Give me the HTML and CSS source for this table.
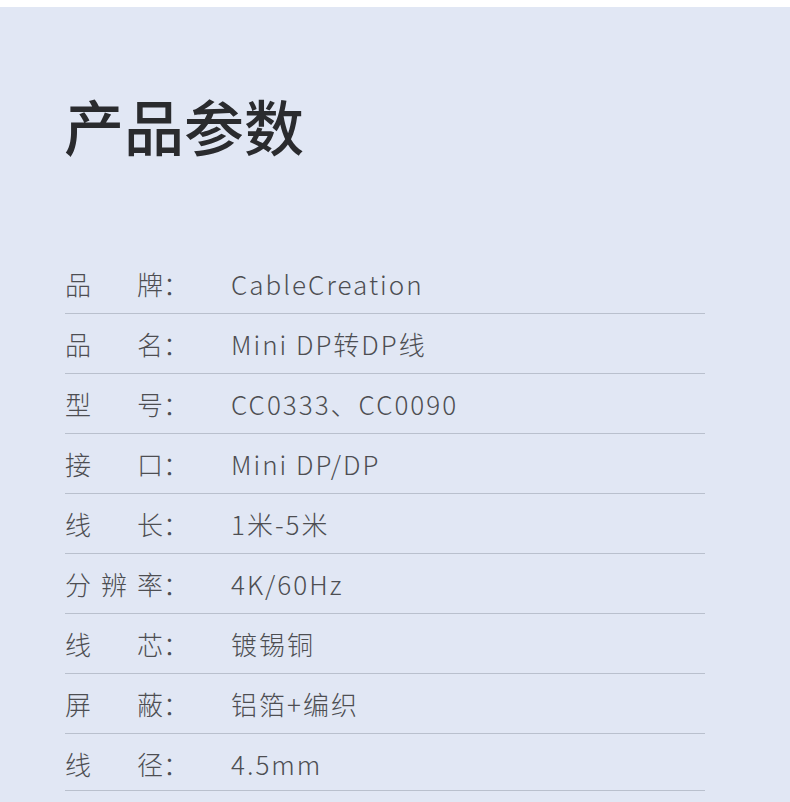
FILE: index.html
```html
<!DOCTYPE html>
<html lang="zh-CN">
<head>
<meta charset="utf-8">
<title>产品参数</title>
<link rel="stylesheet" href="styles.css">
</head>
<body>
<div class="page">
  <div class="inner">
    <h1 class="title">产品参数</h1>
    <div class="table">
      <div class="row"><span class="k">品牌</span><span class="colon">：</span><span class="v">CableCreation</span></div>
      <div class="row"><span class="k">品名</span><span class="colon">：</span><span class="v">Mini DP转DP线</span></div>
      <div class="row"><span class="k">型号</span><span class="colon">：</span><span class="v">CC0333、CC0090</span></div>
      <div class="row"><span class="k">接口</span><span class="colon">：</span><span class="v">Mini DP/DP</span></div>
      <div class="row"><span class="k">线长</span><span class="colon">：</span><span class="v">1米-5米</span></div>
      <div class="row"><span class="k">分辨率</span><span class="colon">：</span><span class="v">4K/60Hz</span></div>
      <div class="row"><span class="k">线芯</span><span class="colon">：</span><span class="v">镀锡铜</span></div>
      <div class="row"><span class="k">屏蔽</span><span class="colon">：</span><span class="v">铝箔+编织</span></div>
      <div class="row last"><span class="k">线径</span><span class="colon">：</span><span class="v">4.5mm</span></div>
    </div>
  </div>
</div>
</body>
</html>
```

FILE: styles.css
```css
html, body {
  margin: 0;
  padding: 0;
  background: #ffffff;
}
.page {
  margin-top: 7px;
  background: #e1e7f4;
  height: 795px;
  overflow: hidden;
  font-family: "Noto Sans CJK SC", "Noto Sans", sans-serif;
}
.inner {
  padding: 0 85px 0 64px;
}
.title {
  margin: 0;
  padding-top: 78px;
  font-size: 60px;
  line-height: 80px;
  font-weight: 500;
  color: #2a2b2e;
  letter-spacing: 0;
}
.table {
  margin-top: 89px;
}
.row {
  height: 60px;
  display: flex;
  align-items: center;
  border-bottom: 1px solid #b9c0cd;
  font-size: 26px;
  font-weight: 300;
  color: #4d4e52;
  box-sizing: border-box;
  margin-left: 1px;
}
.row.last {
  height: 57px;
  padding-top: 3px;
}
.k {
  display: inline-block;
  width: 98px;
  text-align: justify;
  text-align-last: justify;
}
.colon {
  width: 68px;
}
.v {
  letter-spacing: 2px;
}
```
